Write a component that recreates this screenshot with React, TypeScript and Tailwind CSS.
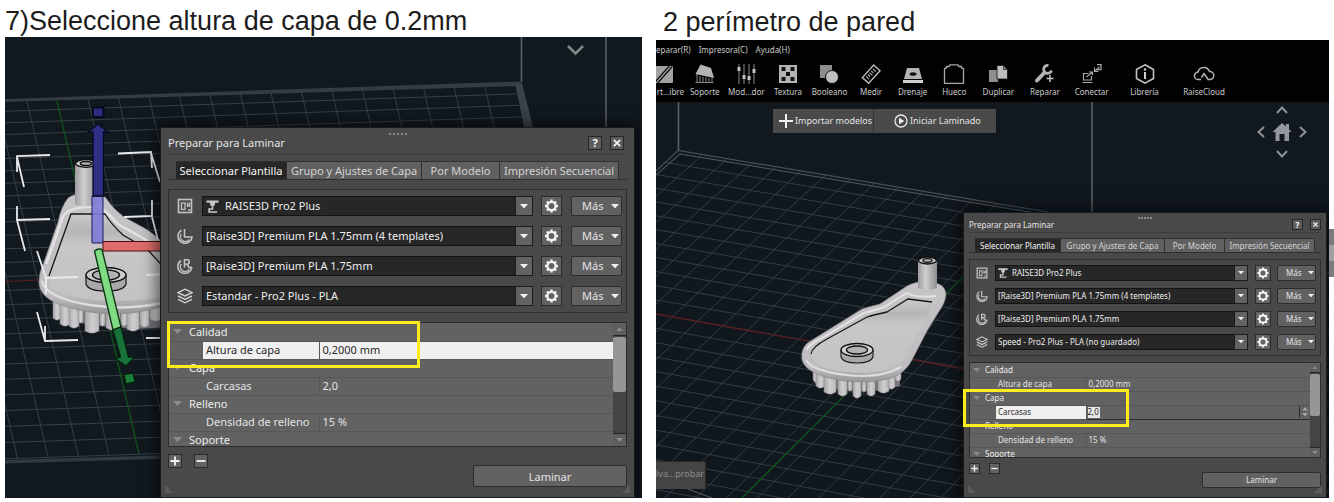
import type { ReactNode, SVGProps } from "react";

type Line = [number, number, number, number];

/* ---------- small glyphs ---------- */

function PrinterFrameIcon() {
  return (
    <svg viewBox="0 0 16 16" className="size-full" fill="none" stroke="#c4c4c4">
      <rect x="1.5" y="1.5" width="13" height="13" strokeWidth="1.6" />
      <rect x="4.5" y="5" width="3.5" height="6.5" strokeWidth="1.3" />
      <path d="M10.500 4.500v3M10 8h3M11 12h2.500M12.500 4.500v3" strokeWidth="1.4" />
    </svg>
  );
}

function SpoolIcon({ letter }: { letter: string }) {
  return (
    <svg viewBox="0 0 16 16" className="size-full" fill="none" stroke="#c4c4c4" strokeWidth="1.6">
      {letter === "L" ? (
        <>
          <path d="M4.500 2.200A7 7 0 1 0 15 9H7.500V1" />
          <path d="M4.300 6a4.500 4.500 0 0 0 7.700 5.500" strokeWidth="1.4" />
        </>
      ) : (
        <>
          <path d="M4 2.500A7 7 0 1 0 14.800 9" />
          <path d="M4.300 6a4.500 4.500 0 0 0 7.700 5.500" strokeWidth="1.4" />
          <path d="M7.500 9.500V1.800H10a2.200 2.200 0 0 1 0 4.400H7.800M10 6.200l2 3.200h2.800" />
        </>
      )}
    </svg>
  );
}

function LayersIcon() {
  return (
    <svg viewBox="0 0 16 16" className="size-full" fill="none" stroke="#d0d0d0" strokeWidth="1.4">
      <path d="M8 1.200 15 4.600 8 8 1 4.600z" />
      <path d="M1 8l7 3.400L15 8" />
      <path d="M1 11.400l7 3.400 7-3.400" />
    </svg>
  );
}

function NozzleIcon() {
  return (
    <svg viewBox="0 0 14 14" className="size-full">
      <path d="M0.500 0.500h13v2.400H9.600V5L7.800 7.400H6.200L4.400 5V2.900H0.500z" fill="#c8c8c8" />
      <path d="M7 7.500v2.200H3.400v3.200H12" fill="none" stroke="#c8c8c8" strokeWidth="1.800" />
    </svg>
  );
}

function GearIcon() {
  return (
    <svg viewBox="0 0 16 16" className="size-full" fill="none" stroke="#f4f4f4">
      <circle cx="8" cy="8" r="4.700" strokeWidth="2.600" />
      <path
        strokeWidth="2.600"
        d="M8 0.600v2.400M8 13v2.400M0.600 8h2.400M13 8h2.400M2.800 2.800l1.700 1.700M11.500 11.500l1.700 1.700M2.800 13.200l1.700-1.700M11.500 4.500l1.700-1.700"
      />
    </svg>
  );
}

function Caret({ up = false, color = "#f0f0f0" }: { up?: boolean; color?: string }) {
  return (
    <svg viewBox="0 0 10 6" className="block w-full" fill={color}>
      <path d={up ? "M0 6h10L5 0.500z" : "M0 0h10L5 5.500z"} />
    </svg>
  );
}

/* ---------- slicing dialog ---------- */

const large = {
  dialog: "w-[475px] text-[11px] leading-4",
  dots: "top-[5px] gap-[2px]",
  header: "mx-[7px] h-[27px] pt-[4px]",
  close: "size-[14px] text-[11px] leading-[12px]",
  closeGap: "mr-[3px] gap-2",
  tabs: "mx-[7px] mt-[6px] pl-2",
  tab: "h-[18px]",
  tabWidths: ["w-[111px]", "w-[135px]", "w-[78px]", "w-[119px]"],
  box: "mx-[7px] mt-[9px] gap-[10px] py-[6px] pr-1 pl-2",
  row: "h-5",
  rowIcon: "mr-[9px] size-4",
  select: "h-5 pl-[3px]",
  selectIcon: "h-5 pl-[22px]",
  nozzle: "left-[4px] size-[13px]",
  arrow: "w-[18px] px-1",
  gear: "ml-2 h-5 w-[21px] p-[2px]",
  more: "ml-[9px] h-5 w-[51px] gap-2 pl-[10px]",
  moreCaret: "w-2",
  list: "mx-[7px] mt-[9px] h-[125px]",
  tr: "h-[18px]",
  indent: "w-[34px]",
  label: "w-[116px] pl-[3px]",
  value: "pl-[3px]",
  group: "pl-[4px] gap-[7px]",
  groupCaret: "w-[9px]",
  scroll: "w-[13px]",
  scrollEnd: "h-[13px] px-[3px]",
  thumb: "h-[55px]",
  footer: "mx-[7px] mt-[7px] h-[43px]",
  small: "size-[14px] p-px",
  smallGap: "gap-3",
  slice: "mt-[11px] h-[22px] w-[154px]",
};

const compact: typeof large = {
  dialog: "w-[364px] text-[8px] leading-3",
  dots: "top-[4px] gap-px",
  header: "mx-[5px] h-5 pt-[4px]",
  close: "size-[11px] text-[8px] leading-[9px]",
  closeGap: "gap-[7px]",
  tabs: "mx-[5px] mt-[5px] pl-[6px]",
  tab: "h-[14px]",
  tabWidths: ["w-[86px]", "w-[104px]", "w-[60px]", "w-[90px]"],
  box: "mx-[5px] mt-[6px] gap-[7px] py-[5px] pr-1 pl-[6px]",
  row: "h-4",
  rowIcon: "mr-[7px] size-3",
  select: "h-4 pl-[2px]",
  selectIcon: "h-4 pl-[16px]",
  nozzle: "left-[3px] size-[10px]",
  arrow: "w-[14px] px-[3px]",
  gear: "ml-[7px] size-4 p-px",
  more: "ml-[6px] h-4 w-[39px] gap-[6px] pl-[8px]",
  moreCaret: "w-[6px]",
  list: "mx-[5px] mt-[6px] h-[96px]",
  tr: "h-[14px]",
  indent: "w-[26px]",
  label: "w-[90px] pl-[2px]",
  value: "pl-[2px]",
  group: "pl-[3px] gap-[5px]",
  groupCaret: "w-[7px]",
  scroll: "w-[10px]",
  scrollEnd: "h-[10px] px-[2px]",
  thumb: "h-[42px]",
  footer: "mx-[5px] mt-[5px] h-[34px]",
  small: "size-[11px] p-px",
  smallGap: "gap-[9px]",
  slice: "mt-[9px] h-4 w-[119px]",
};

type Look = typeof large;

const raised = "border border-[#2c2c2c] bg-[#626262] text-[#e4e4e4]";

function ProfileRow({ s, icon, label, value, nozzle }: { s: Look; icon: ReactNode; label: string; value: string; nozzle?: boolean }) {
  return (
    <div className={`flex items-center ${s.row}`}>
      <span className={`shrink-0 ${s.rowIcon}`}>{icon}</span>
      <div className="relative min-w-0 flex-1">
        <select
          aria-label={label}
          className={`block w-full appearance-none border border-[#141414] bg-[#272727] text-[#ededed] ${nozzle ? s.selectIcon : s.select}`}
        >
          <option>{value}</option>
        </select>
        {nozzle && <span className={`pointer-events-none absolute inset-y-0 my-auto ${s.nozzle}`}><NozzleIcon /></span>}
        <span className={`pointer-events-none absolute inset-y-0 right-0 flex items-center border border-[#1c1c1c] bg-[#626262] ${s.arrow}`}>
          <Caret />
        </span>
      </div>
      <button type="button" aria-label={`Ajustes: ${label}`} className={`shrink-0 ${raised} ${s.gear}`}><GearIcon /></button>
      <button type="button" className={`flex shrink-0 items-center rounded-[2px] ${raised} ${s.more}`}>
        Más
        <span className={`shrink-0 ${s.moreCaret}`}><Caret /></span>
      </button>
    </div>
  );
}

function GroupRow({ s, name }: { s: Look; name: string }) {
  return (
    <tr className={s.tr}>
      <th colSpan={3} scope="rowgroup" className="border-b border-[#575757] p-0 text-left font-normal text-[#ececec]">
        <span className={`flex items-center ${s.group}`}>
          <span className={s.groupCaret}><Caret color="#8c8c8c" /></span>
          {name}
        </span>
      </th>
    </tr>
  );
}

function ParamRow({ s, name, value, mode }: { s: Look; name: string; value: string; mode?: "selected" | "editing" }) {
  const labelTone = mode ? "bg-[#f0f0f0] text-[#2a2a2a]" : "text-[#e2e2e2]";
  const valueTone = mode === "selected" ? "bg-[#f0f0f0] text-[#2a2a2a]" : "text-[#e2e2e2]";
  return (
    <tr className={s.tr}>
      <td className={`border-b border-[#575757] p-0 ${s.indent}`} />
      <th scope="row" className={`border-r border-b border-[#575757] py-0 pr-0 text-left font-normal whitespace-nowrap ${labelTone} ${s.label}`}>{name}</th>
      {mode === "editing" ? (
        <td className="border-y border-[#2c2c2c] p-0">
          <span className="flex items-center justify-between">
            <input aria-label={name} defaultValue={value} className="ml-px h-[11px] w-3 bg-[#e8e8e8] text-[#2a2a2a]" />
            <span className="flex h-3 w-[11px] flex-col justify-center gap-[2px] border-l border-[#2c2c2c] px-[2px]">
              <Caret up color="#a8a8a8" />
              <Caret color="#a8a8a8" />
            </span>
          </span>
        </td>
      ) : (
        <td className={`border-b border-[#575757] py-0 pr-0 ${valueTone} ${s.value}`}>{value}</td>
      )}
    </tr>
  );
}

function SliceDialog({ s, template, editing }: { s: Look; template: string; editing: boolean }) {
  const tabs = ["Seleccionar Plantilla", "Grupo y Ajustes de Capa", "Por Modelo", "Impresión Secuencial"];
  return (
    <section aria-label="Preparar para Laminar" className={`relative shrink-0 border border-[#1a1a1a] bg-[#494949] font-['Noto_Sans',sans-serif] text-[#e4e4e4] shadow-[0_0_14px_4px_rgba(0,0,0,0.55)] ${s.dialog}`}>
      <div className={`absolute inset-x-0 flex justify-center ${s.dots}`}>
        {[0, 1, 2, 3, 4].map((i) => <i key={i} className="size-[2px] bg-[#8c8c8c]" />)}
      </div>
      <header className={`flex items-center justify-between border-b border-[#3c3c3c] ${s.header}`}>
        <h2>Preparar para Laminar</h2>
        <div className={`flex ${s.closeGap}`}>
          <button type="button" className={`border border-[#262626] bg-[#5c5c5c] text-center font-bold text-white ${s.close}`}>?</button>
          <button type="button" aria-label="Cerrar" className={`border border-[#262626] bg-[#5c5c5c] p-[2px] ${s.close}`}>
            <svg viewBox="0 0 10 10" className="size-full" stroke="#f4f4f4" strokeWidth="2.200"><path d="M1 1l8 8M9 1L1 9" /></svg>
          </button>
        </div>
      </header>
      <nav role="tablist" className={`flex border-b border-[#2e2e2e] ${s.tabs}`}>
        {tabs.map((t, i) => (
          <button
            key={t}
            type="button"
            role="tab"
            aria-selected={i === 0}
            className={`flex shrink-0 items-center justify-center border-t border-r border-[#303030] whitespace-nowrap ${s.tab} ${s.tabWidths[i]} ${i === 0 ? "bg-[#272727] text-[#f4f4f4]" : "bg-[#606060] text-[#d4d4d4]"}`}
          >
            {t}
          </button>
        ))}
      </nav>
      <div className={`flex flex-col border border-[#303030] ${s.box}`}>
        <ProfileRow s={s} icon={<PrinterFrameIcon />} label="Impresora" value="RAISE3D Pro2 Plus" nozzle />
        <ProfileRow s={s} icon={<SpoolIcon letter="L" />} label="Extrusor izquierdo" value="[Raise3D] Premium PLA 1.75mm (4 templates)" />
        <ProfileRow s={s} icon={<SpoolIcon letter="R" />} label="Extrusor derecho" value="[Raise3D] Premium PLA 1.75mm" />
        <ProfileRow s={s} icon={<LayersIcon />} label="Plantilla" value={template} />
      </div>
      <div className={`flex overflow-hidden border border-[#2c2c2c] bg-[#626262] ${s.list}`}>
        <div className="min-w-0 flex-1 overflow-hidden">
          <table className="w-full table-fixed border-collapse">
            <colgroup><col className={s.indent} /><col className={s.label} /><col /></colgroup>
            <tbody>
              <GroupRow s={s} name="Calidad" />
              <ParamRow s={s} name="Altura de capa" value="0,2000 mm" mode={editing ? undefined : "selected"} />
              <GroupRow s={s} name="Capa" />
              <ParamRow s={s} name="Carcasas" value="2,0" mode={editing ? "editing" : undefined} />
              <GroupRow s={s} name="Relleno" />
              <ParamRow s={s} name="Densidad de relleno" value="15 %" />
              <GroupRow s={s} name="Soporte" />
            </tbody>
          </table>
        </div>
        <div className={`flex shrink-0 flex-col bg-[#444444] ${s.scroll}`}>
          <span className={`flex items-center border-b border-[#262626] bg-[#5e5e5e] ${s.scrollEnd}`}><Caret up color="#8c8c8c" /></span>
          <span className={`mt-px rounded-[2px] bg-[#969696] ${s.thumb}`} />
          <span className={`mt-auto flex items-center border-t border-[#262626] bg-[#5e5e5e] ${s.scrollEnd}`}><Caret color="#8c8c8c" /></span>
        </div>
      </div>
      <footer className={`flex items-start justify-between ${s.footer}`}>
        <div className={`flex ${s.smallGap}`}>
          <button type="button" aria-label="Añadir" className={`${raised} ${s.small}`}>
            <svg viewBox="0 0 10 10" className="size-full" stroke="#f4f4f4" strokeWidth="1.800"><path d="M5 0.500v9M0.500 5h9" /></svg>
          </button>
          <button type="button" aria-label="Quitar" className={`${raised} ${s.small}`}>
            <svg viewBox="0 0 10 10" className="size-full" stroke="#f4f4f4" strokeWidth="1.800"><path d="M0.500 5h9" /></svg>
          </button>
        </div>
        <button type="button" className={`rounded-[2px] text-center leading-none ${raised} ${s.slice}`}>Laminar</button>
      </footer>
      <svg viewBox="0 0 8 8" className="absolute bottom-1 left-1 size-2" fill="#5c5c5c"><path d="M0 0v8h8z" /></svg>
      <svg viewBox="0 0 8 8" className="absolute right-1 bottom-1 size-2" fill="#5c5c5c"><path d="M8 0v8H0z" /></svg>
    </section>
  );
}

/* ---------- 3D view drawings ---------- */

function Lines({ items, ...rest }: { items: Line[] } & SVGProps<SVGGElement>) {
  return (
    <g {...rest}>
      {items.map((l, i) => <line key={i} x1={l[0]} y1={l[1]} x2={l[2]} y2={l[3]} />)}
    </g>
  );
}

function teeth(list: [number, number, number, number][], id: string) {
  return list.map(([x, y, w, h], i) => (
    <path key={i} d={`M${x} ${y}h${w}v${h - 2}l${-w * 0.35} 2h${-w * 0.3}l${-w * 0.35} -2z`} fill={`url(#${id}-tooth)`} stroke="#8b898b" strokeWidth="0.500" />
  ));
}

function ModelGradients({ id }: { id: string }) {
  return (
    <defs>
      <linearGradient id={`${id}-tooth`}>
        <stop offset="0" stopColor="#a9a7a9" />
        <stop offset="0.500" stopColor="#cfcdcf" />
        <stop offset="1" stopColor="#bbb9bb" />
      </linearGradient>
      <linearGradient id={`${id}-pole`}>
        <stop offset="0" stopColor="#9c9a9c" />
        <stop offset="0.400" stopColor="#cfcdcf" />
        <stop offset="1" stopColor="#918f91" />
      </linearGradient>
      <linearGradient id={`${id}-rim`} x2="0" y2="1">
        <stop offset="0" stopColor="#c6c4c6" />
        <stop offset="0.850" stopColor="#bebcbe" />
        <stop offset="1" stopColor="#979597" />
      </linearGradient>
      <linearGradient id={`${id}-floor`} x2="0" y2="1">
        <stop offset="0" stopColor="#cbc9cb" />
        <stop offset="0.200" stopColor="#b7b5b7" />
        <stop offset="0.350" stopColor="#c8c6c8" />
        <stop offset="1" stopColor="#c4c2c4" />
      </linearGradient>
    </defs>
  );
}

function PlateView() {
  const rows: Line[] = [];
  for (let i = 1; i < 27; i++) {
    const y = 100 + 11.2 * i + 0.1 * i * i;
    rows.push([5, y, 560, y - 0.034 * 555]);
  }
  const cols: Line[] = [];
  for (let k = -3; k < 16; k++) {
    const x = 27 + 30.5 * k;
    if (k !== 1) cols.push([x, 102 - 0.034 * (x - 5), x + 82, 456 - 0.034 * (x - 5)]);
  }
  return (
    <svg viewBox="5 37 637 461" preserveAspectRatio="xMinYMin slice" className="absolute inset-0 size-full" aria-hidden="true">
      <ModelGradients id="plate" />
      <Lines items={rows} stroke="#363f46" strokeWidth="1" />
      <Lines items={cols} stroke="#363f46" strokeWidth="1" />
      <path d="M642 50V498H5V462L175 456 642 456zM516 82 642 440V37H522z" fill="#11191f" />
      <path d="M5 99 521 81.500v4.500L5 102z" fill="#343b43" />
      <path d="M5 460 175 455v3.500L5 463.500z" fill="#31383f" />
      <path d="M515 83h7l11 44h-9z" fill="#3b424a" />
      <path d="M521.500 37V82M606 37V130" stroke="#596064" strokeWidth="1.600" />
      <path d="M5 281.500 60 279" stroke="#5c1c20" />
      <path d="M57 101 139 454" stroke="#10501c" strokeWidth="1.400" />

      <path d="M55 300H175V326Q120 334 58 318z" fill="#77757a" />
      {teeth([[53, 300, 8, 20], [60, 302, 10, 24], [69, 304, 10, 24], [78, 304, 5, 19], [85, 306, 14, 27], [100, 306, 5, 20], [106, 306, 14, 24], [121, 306, 6, 20], [127, 304, 12, 27], [140, 303, 9, 24], [150, 301, 12, 20]], "plate")}
      <path d="M68 198Q75 193 86 194Q101 193 106 198Q112 208 124 217L146 229Q160 238 180 260V300Q150 313 118 314Q84 314 58 304Q39 296 39 282Q39 272 44 262L58 222Q61 207 68 198z" fill="url(#plate-rim)" stroke="#858385" strokeWidth="0.600" />
      <path d="M71 214H105Q111 224 123 235L147 249 180 277V294Q150 301 112 301Q69 300 51 288Q46 282 49 273z" fill="url(#plate-floor)" />
      <path d="M49 276 71 214H105Q111 224 123 235L147 249 170 274" fill="none" stroke="#151515" strokeWidth="1.300" />
      <path d="M42 281Q46 298 90 305Q130 311 165 302" fill="none" stroke="#dedcde" strokeWidth="2.500" />
      <path d="M46 264Q55 240 63 216Q72 205 100 207Q108 213 118 224L148 241" fill="none" stroke="#e4e2e4" strokeWidth="2.500" />
      <path d="M75 164V204Q86 209 97 204V164z" fill="url(#plate-pole)" />
      <ellipse cx="86" cy="163.500" rx="10.500" ry="3.800" fill="#c8c6c8" stroke="#101010" strokeWidth="1.300" />
      <ellipse cx="86" cy="163.500" rx="5.500" ry="2" fill="#b4b2b4" stroke="#101010" strokeWidth="1.400" />
      <path d="M86 275v9q2 7 20 7t20-7v-9z" fill="#a9a7a9" stroke="#151515" strokeWidth="1.200" />
      <ellipse cx="106" cy="275" rx="20" ry="7.500" fill="#cccacc" stroke="#101010" strokeWidth="1.400" />
      <ellipse cx="106" cy="275" rx="13.500" ry="5" fill="#b4b2b4" stroke="#101010" strokeWidth="1.400" />

      <path d="M92 196h11v47H92z" fill="#7d7dd6" fillOpacity="0.900" stroke="#1b1b60" />
      <path d="M93 196V132H88L98 124 108 132H103.500V196z" fill="#2f2f86" stroke="#090920" strokeWidth="1.300" />
      <rect x="93" y="107.500" width="10.500" height="9.500" fill="#2c2c7c" stroke="#07071c" strokeWidth="1.800" />
      <path d="M103 241.500H165V251H103z" fill="#df6d6d" stroke="#4a1010" />
      <path d="M102 249.500Q98 248 94.500 251L113 330 121 327z" fill="#7fdc84" stroke="#0d3813" strokeWidth="1.400" />
      <path d="M113 330 121 327 128.500 357H135L126 366 115 358.500 120.500 357z" fill="#18723a" stroke="#04200c" strokeWidth="1.300" />
      <path d="M124 374.500 133 373 135 382 126 384z" fill="#18803a" stroke="#04200c" strokeWidth="1.300" />

      <g fill="none" stroke="#e8eaec" strokeWidth="1.800">
        <path d="M50 155 17 156V172M17 157 24 187M118 153.500 151 152 152 168M151 153 160 182" />
        <path d="M17 206V220L50 219M17 220 25 251M124 217 152 216V200M152 217 158 240" />
        <path d="M37 251 46 278 78 277M46 278V294M146 275 165 274" />
        <path d="M37 312 45 341 78 340M45 341V326M146 338H165" />
      </g>
      <path d="M568 46 575.500 53.500 583 46" fill="none" stroke="#81878a" strokeWidth="2.600" />
    </svg>
  );
}

function PerspectiveView() {
  const along: Line[] = [];
  for (let i = 1; i < 34; i++) {
    const x = 678 - 13.5 * i;
    const y = 151 + 11.3 * i + 0.02 * i * i;
    along.push([x, y, x + 900, y + 900 * (0.166 + 0.0008 * i)]);
  }
  const across: Line[] = [];
  for (let k = 1; k < 30; k++) {
    const x = 678 + 24.5 * k;
    const y = 151 + 4.07 * k;
    across.push([x, y, x - 420, y + 420 * (0.88 + 0.0075 * k)]);
  }
  return (
    <svg viewBox="656 102 673 396" preserveAspectRatio="xMinYMin slice" className="absolute inset-0 size-full" aria-hidden="true">
      <ModelGradients id="persp" />
      <path d="M678 151 656 171V498H1329V260z" fill="#10171d" />
      <Lines items={along} stroke="#343d44" strokeWidth="1" />
      <Lines items={across} stroke="#343d44" strokeWidth="1" />
      <path d="M656 171 678 150.500 1060 214M656 175 680 154 1060 217" fill="none" stroke="#475056" strokeWidth="1.200" />
      <path d="M678.500 102V151M1092 102V230" stroke="#596064" strokeWidth="1.600" />
      <path d="M656 314 970 370" stroke="#561c20" strokeWidth="1.400" />
      <path d="M742 498 840 400 970 270" stroke="#0f4f1c" strokeWidth="1.600" />

      <path d="M814 368H900V386Q858 398 815 384z" fill="#77757a" />
      {teeth([[813, 368, 5, 14], [816, 370, 9, 18], [824, 372, 12, 22], [838, 374, 9, 22], [848, 374, 4, 17], [853, 375, 8, 23], [862, 375, 4, 17], [867, 374, 8, 22], [878, 373, 11, 20], [888, 371, 7, 18], [895, 367, 6, 14]], "persp")}
      <path d="M907 286Q916 281 930 282Q945 283 946 294Q946 302 938 313L927 331 912 360Q906 372 892 378Q868 385 838 380Q806 374 802 360Q800 346 812 340L862 309Q868 307 880 304z" fill="url(#persp-rim)" stroke="#858385" strokeWidth="0.600" />
      <path d="M811 354Q812 347 827 339L867 317Q873 315 887 312L908 299 932 303Q931 312 922 326L904 358Q896 371 866 373Q813 372 811 354z" fill="url(#persp-floor)" />
      <path d="M811 354Q812 347 827 339L867 317Q873 315 887 312L908 299 932 302" fill="none" stroke="#151515" strokeWidth="1.300" />
      <path d="M806 360Q812 371 846 375Q880 379 901 367" fill="none" stroke="#dedcde" strokeWidth="2.200" />
      <path d="M806 350Q810 344 820 339L864 313Q873 311 884 307L907 293Q914 298 936 296" fill="none" stroke="#e4e2e4" strokeWidth="2" />
      <path d="M918 261V288Q927 292 937 288V261z" fill="url(#persp-pole)" />
      <ellipse cx="927.500" cy="260.500" rx="9" ry="3.500" fill="#c8c6c8" stroke="#101010" strokeWidth="1.300" />
      <ellipse cx="927.500" cy="260.500" rx="4.500" ry="1.800" fill="#b4b2b4" stroke="#101010" strokeWidth="1.300" />
      <path d="M841 350v7q2 6 16 6t16-6v-7z" fill="#a9a7a9" stroke="#151515" strokeWidth="1.100" />
      <ellipse cx="857" cy="350" rx="16" ry="6.500" fill="#d2d0d2" stroke="#101010" strokeWidth="1.300" />
      <ellipse cx="857" cy="350" rx="10.500" ry="4" fill="#b4b2b4" stroke="#101010" strokeWidth="1.300" />
      <path d="M685 488 712 498" stroke="#596064" />
    </svg>
  );
}

/* ---------- toolbar ---------- */

const toolIcons: Record<string, ReactNode> = {
  "rt...ibre": (
    <g transform="translate(-11 0)">
      <rect x="0" y="2" width="20" height="17" rx="1" fill="#a2a2a2" />
      <path d="M3 19 18 2" stroke="#0a0a0a" strokeWidth="4" />
      <path d="M3 19 18 2" stroke="#a2a2a2" strokeWidth="1.200" />
    </g>
  ),
  Soporte: (
    <>
      <path d="M2 10v8M5 12v6M8 13v5M11 13v5M14 14v4M17 14v4M0.500 18.500h18" stroke="#8a8a8a" strokeWidth="1" />
      <path d="M5.500 0.500 16 4 19 14 0.500 10z" fill="#b4b4b4" />
    </>
  ),
  "Mod...dor": (
    <>
      <path d="M3 0v20M8 0v20M13 0v20M18 0v20" stroke="#8a8a8a" strokeWidth="1" />
      <path d="M1.500 3h3v4h-3zM6.500 11h3v4h-3zM11.500 12h3v4h-3zM16.500 5h3v4h-3z" fill="#c0c0c0" />
    </>
  ),
  Textura: (
    <>
      <path d="M1 1h18v18H1z" fill="#b4b4b4" />
      <path d="M3.500 3h4v4h-4zM12.500 3h4v4h-4zM8 8h4v4H8zM3.500 13h4v4h-4zM12.500 13h4v4h-4z" fill="#111" />
    </>
  ),
  Booleano: (
    <>
      <path d="M1 1h12v13H1z" fill="#8e8e8e" />
      <circle cx="13" cy="13" r="6.500" fill="#c0c0c0" stroke="#111" strokeWidth="1" />
    </>
  ),
  Medir: (
    <g transform="rotate(-48 10 10)" fill="none" stroke="#bababa" strokeWidth="1.400">
      <path d="M1.500 6h17v8.500h-17z" />
      <path d="M5 8v4M7.500 8v3M10 8v4M12.500 8v3M15 8v4" strokeWidth="1.100" />
    </g>
  ),
  Drenaje: (
    <>
      <path d="M4 4h12l3 11H1z" fill="#b4b4b4" />
      <path d="M0 16h20v3H0z" fill="#d0d0d0" />
      <ellipse cx="10" cy="10" rx="3.500" ry="1.800" fill="#111" />
    </>
  ),
  Hueco: <path d="M2.500 2.500H5L6 0.800h8L15 2.500h2.500V4l2 0.500V19.300H0.500V4.500L2.500 4z" fill="none" stroke="#a8a8a8" strokeWidth="1.300" />,
  Duplicar: (
    <>
      <path d="M1 6h9v12H1z" fill="#8e8e8e" />
      <path d="M9 1.500h6.500l4 4V15H9z" fill="#bdbdbd" stroke="#111" strokeWidth="0.800" />
      <path d="M15.500 1.500v4h4z" fill="#7a7a7a" stroke="#111" strokeWidth="0.600" />
    </>
  ),
  Reparar: (
    <>
      <path d="M2 16.500 9.500 8.500" stroke="#b4b4b4" strokeWidth="4" strokeLinecap="round" />
      <path d="M13.500 1.500A4 4 0 1 0 16.500 6.500" stroke="#b4b4b4" strokeWidth="2.800" fill="none" />
      <path d="M15 11v7M11.500 14.500h7" stroke="#c4c4c4" strokeWidth="1.500" />
    </>
  ),
  Conectar: (
    <g fill="none" stroke="#a8a8a8" strokeWidth="1.200">
      <path d="M6.500 9.500h-5v6.500h8v-4M0.500 18.500h10M4.500 13l5.500-4.500M7 8h3.500v3" />
      <path d="M15 0.700h4v5h-5M12.500 3.500v4h4M12.500 7.500l5-4.500" />
    </g>
  ),
  "Librería": (
    <>
      <path d="M10 0.800 18.500 5.500v9L10 19.200 1.500 14.500v-9z" fill="none" stroke="#c4c4c4" strokeWidth="1.600" />
      <path d="M10 8v7" stroke="#d0d0d0" strokeWidth="2" />
      <circle cx="10" cy="5.500" r="1.200" fill="#d0d0d0" />
    </>
  ),
  RaiseCloud: (
    <g fill="none" stroke="#b4b4b4" strokeWidth="1.500">
      <path d="M7 15.500H4.300a3.700 3.700 0 0 1-0.300-7.400A6 6 0 0 1 15.500 7.500a4 4 0 0 1 0.500 8h-1.800L10 9.500 7.500 13.500" />
    </g>
  ),
};

function Tool({ name, className = "items-center" }: { name: string; className?: string }) {
  return (
    <button type="button" className={`flex flex-col gap-[2px] whitespace-nowrap ${className}`}>
      <svg viewBox="0 0 20 20" className="size-5 overflow-visible">{toolIcons[name]}</svg>
      {name}
    </button>
  );
}

const chevrons: Record<string, string> = {
  Arriba: "M1 7 6 1.500 11 7",
  Izquierda: "M8 1 2.500 6 8 11",
  Derecha: "M4 1 9.500 6 4 11",
  Abajo: "M1 4 6 9.500 11 4",
};

function NavButton({ name, className }: { name: string; className: string }) {
  return (
    <button type="button" aria-label={name} className={`size-3 ${className}`}>
      <svg viewBox="0 0 12 12" className="size-full" fill="none" stroke="#8d9296" strokeWidth="2"><path d={chevrons[name]} /></svg>
    </button>
  );
}

function Toolbar() {
  return (
    <div className="h-[62px] overflow-hidden bg-[#020202] text-[8px] leading-3 text-[#c8c8c8]">
      <nav className="flex gap-2 pt-1">
        <button type="button">eparar(R)</button>
        <button type="button">Impresora(C)</button>
        <button type="button">Ayuda(H)</button>
      </nav>
      <div className="flex pt-2">
        <Tool name="rt...ibre" className="w-7 shrink-0 items-end" />
        <div className="grid w-[291px] grid-cols-7">
          {["Soporte", "Mod...dor", "Textura", "Booleano", "Medir", "Drenaje", "Hueco"].map((n) => <Tool key={n} name={n} />)}
        </div>
        <div className="grid w-[140px] grid-cols-3">
          {["Duplicar", "Reparar", "Conectar"].map((n) => <Tool key={n} name={n} />)}
        </div>
        <Tool name="Librería" className="w-[59px] items-center" />
        <Tool name="RaiseCloud" className="w-[60px] items-center" />
      </div>
    </div>
  );
}

export default function App() {
  return (
    <main className="relative grid grid-cols-[637fr_673fr] gap-[14px] bg-white px-[5px] pb-1 font-['Liberation_Sans',sans-serif]">
      <article className="flex min-w-0 flex-col">
        <h1 className="h-[37px] pt-[5px] text-[27px] leading-8 whitespace-nowrap text-[#1c1c1c]">7)Seleccione altura de capa de 0.2mm</h1>
        <div className="relative flex flex-1 items-start justify-end overflow-hidden bg-[#11191f] pt-[90px] pr-[7px]">
          <PlateView />
          <SliceDialog s={large} template="Estandar - Pro2 Plus - PLA" editing={false} />
          <div className="pointer-events-none absolute top-[284px] right-[222px] h-[47px] w-[253px] border-[3px] border-[#fdec1c]" />
        </div>
      </article>
      <article className="flex min-w-0 flex-col font-['Noto_Sans',sans-serif]">
        <h1 className="h-10 pt-[6px] pl-[7px] font-['Liberation_Sans',sans-serif] text-[27px] leading-8 whitespace-nowrap text-[#1c1c1c]">2 perímetro de pared</h1>
        <Toolbar />
        <div className="relative flex flex-1 items-start justify-end overflow-hidden bg-[#11191f] pt-[110px] pr-[2px]">
          <PerspectiveView />
          <div className="absolute top-[7px] left-[117px] flex h-6 w-[223px] items-center bg-[#4a4a4a] text-[9px] leading-3 text-[#e4e4e4]">
            <button type="button" className="flex h-full w-[101px] items-center gap-[2px] border-r border-[#363636] pl-[6px] whitespace-nowrap">
              <svg viewBox="0 0 14 14" className="size-[14px] shrink-0" stroke="#f0f0f0" strokeWidth="2"><path d="M7 0v14M0 7h14" /></svg>
              Importar modelos
            </button>
            <button type="button" className="flex h-full flex-1 items-center gap-[2px] pl-5 whitespace-nowrap">
              <svg viewBox="0 0 14 14" className="size-[14px] shrink-0"><circle cx="7" cy="7" r="6" fill="none" stroke="#e8e8e8" strokeWidth="1.300" /><path d="M5 3.800v6.400L10.300 7z" fill="#f0f0f0" /></svg>
              Iniciar Laminado
            </button>
          </div>
          <div className="absolute top-[4px] right-[21px] grid grid-cols-[12px_28px_12px] grid-rows-[12px_28px_14px] place-items-center">
            <NavButton name="Arriba" className="col-start-2" />
            <NavButton name="Izquierda" className="col-start-1 row-start-2" />
            <button type="button" aria-label="Inicio" className="col-start-2 row-start-2 size-5">
              <svg viewBox="0 0 20 20" className="size-full" fill="#9597a0"><path d="M10 1 14 4.600V2h3v5.300L19.500 10H17v9h-4.500v-7h-5v7H3.500v-9H0.500z" /></svg>
            </button>
            <NavButton name="Derecha" className="col-start-3 row-start-2" />
            <NavButton name="Abajo" className="col-start-2 row-start-3" />
          </div>
          <button type="button" className="absolute bottom-[9px] left-0 h-7 w-[50px] border-t border-r border-[#2a2a2a] bg-[#444444] pr-[5px] pb-1 text-right text-[9px] leading-3 text-[#8c8c8c]">lva...probar</button>
          <SliceDialog s={compact} template="Speed - Pro2 Plus - PLA (no guardado)" editing />
          <div className="pointer-events-none absolute top-[287px] right-[200px] h-[38px] w-[166px] border-[3px] border-[#fdec1c]" />
        </div>
      </article>
      <div className="absolute top-[229px] right-0 flex h-12 w-[5px] items-center bg-[#7b7b7b]"><i className="h-4 w-[5px] bg-[#a0a0a0]" /></div>
    </main>
  );
}
